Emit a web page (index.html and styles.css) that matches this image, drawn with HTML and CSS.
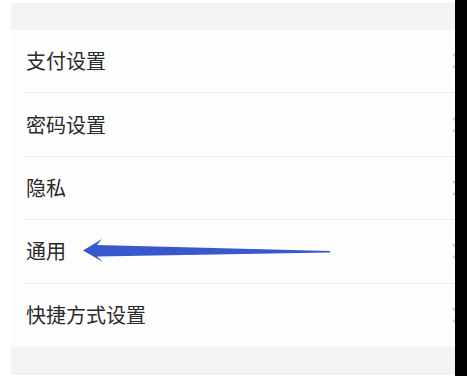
FILE: index.html
```html
<!DOCTYPE html>
<html lang="zh">
<head>
<meta charset="utf-8">
<link rel="stylesheet" href="styles.css">
</head>
<body>
<div class="page">
  <div class="main">
    <div class="band band-top"></div>
    <ul class="list">
      <li class="row"><span class="label">支付设置</span><svg class="chev" viewBox="0 0 8 16"><path d="M1 1 L7 8 L1 15" fill="none" stroke="#c4c4c4" stroke-width="1.6"/></svg></li>
      <li class="row"><span class="label">密码设置</span><svg class="chev" viewBox="0 0 8 16"><path d="M1 1 L7 8 L1 15" fill="none" stroke="#c4c4c4" stroke-width="1.6"/></svg></li>
      <li class="row"><span class="label">隐私</span><svg class="chev" viewBox="0 0 8 16"><path d="M1 1 L7 8 L1 15" fill="none" stroke="#c4c4c4" stroke-width="1.6"/></svg></li>
      <li class="row"><span class="label">通用</span><svg class="chev" viewBox="0 0 8 16"><path d="M1 1 L7 8 L1 15" fill="none" stroke="#c4c4c4" stroke-width="1.6"/></svg></li>
      <li class="row"><span class="label">快捷方式设置</span><svg class="chev" viewBox="0 0 8 16"><path d="M1 1 L7 8 L1 15" fill="none" stroke="#c4c4c4" stroke-width="1.6"/></svg></li>
    </ul>
    <div class="band band-bottom"></div>
  </div>
  <div class="edge"></div>
  <svg class="arrow" viewBox="0 0 467 376" width="467" height="376">
    <polygon points="83,250.5 102,239 97,245 330,251 330,252.5 97,256.5 103,262" fill="#3858cc"/>
  </svg>
</div>
</body>
</html>
```

FILE: styles.css
```css
html, body {
  margin: 0;
  padding: 0;
  background: #ffffff;
}

.page {
  position: relative;
  display: flex;
  width: 467px;
  height: 376px;
  overflow: hidden;
  font-family: "Noto Sans CJK SC", "Noto Sans", sans-serif;
}

.main {
  flex: 1;
  padding: 3px 0 0 11px;
  overflow: hidden;
  background: #ffffff;
}

.edge {
  width: 12px;
  background: #000000;
}

.band {
  background: #f3f3f6;
}

.band-top {
  height: 27px;
}

.band-bottom {
  height: 28px;
}

.list {
  list-style: none;
  margin: 0;
  padding: 0;
  background: #fdfdfd;
}

.row {
  box-sizing: border-box;
  height: 63.4px;
  display: flex;
  align-items: center;
  justify-content: space-between;
  padding-left: 15px;
  margin-left: 12px;
  padding-left: 3px;
  border-bottom: 1px solid #ececec;
}

.row:last-child {
  border-bottom: none;
}

.label {
  font-size: 20px;
  color: #2a2a2a;
  line-height: 1;
  letter-spacing: 0;
}

.chev {
  width: 8px;
  height: 16px;
  margin-right: -5px;
  flex: none;
}

.arrow {
  position: absolute;
  left: 0;
  top: 0;
  pointer-events: none;
}
```
